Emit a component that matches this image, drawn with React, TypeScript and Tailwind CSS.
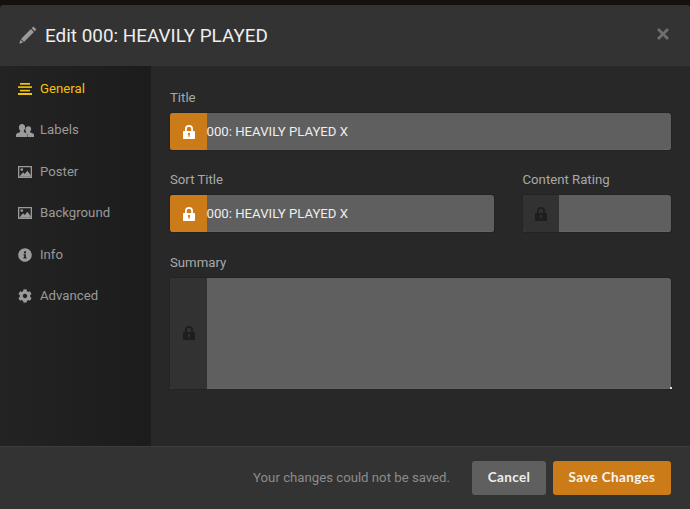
import type { ReactNode } from "react";
import { FaCog, FaInfoCircle } from "react-icons/fa";

function GeneralIcon() {
  return (
    <svg width="14" height="12" viewBox="0 0 14 12" fill="currentColor">
      <rect x="2" y="0" width="10" height="1.7" />
      <rect x="0" y="3.3" width="14" height="1.6" />
      <rect x="2" y="6.8" width="10" height="1.6" />
      <rect x="0" y="10" width="14" height="2" />
    </svg>
  );
}

function UsersIcon() {
  return (
    <svg width="18" height="13" viewBox="0 0 18 13" fill="currentColor">
      <path d="M12.6 2.2c1.5 0 2.5 1.1 2.5 2.7 0 1-.4 1.900-1 2.500v.8c0 .5 3.900 1 3.900 2.300V13h-6v-1.500c0-1.100-1.300-1.900-2.500-2.400.3-.3.6-.7.7-1.200-.5-.6-.8-1.500-.8-2.500 0-2 1.300-3.200 3.200-3.200z" />
      <path d="M6 0c1.900 0 3.100 1.400 3.100 3.500 0 1.300-.5 2.500-1.300 3.200v1.100c0 .7 3.700 1.400 3.700 3.100V13H0v-2.100c0-1.700 4.200-2.400 4.200-3.100V6.700C3.400 6 2.900 4.800 2.900 3.500 2.900 1.400 4.100 0 6 0z" />
    </svg>
  );
}

function ImageIcon() {
  return (
    <svg width="14" height="12" viewBox="0 0 14 12" fill="currentColor">
      <path
        fillRule="evenodd"
        d="M0 0h14v12H0zM1.300 1.300v9.400h11.400V1.300z"
      />
      <circle cx="3.800" cy="3.600" r="1.300" />
      <path d="M1.300 10.700 5 6.200l1.800 1.900 2.500-3.400 3.400 4.300v1.700z" />
    </svg>
  );
}

function PencilIcon() {
  return (
    <svg width="18" height="18" viewBox="0 0 18 18" fill="currentColor">
      <path d="M14.400.6 17.400 3.600 15.700 5.300 12.700 2.300z" />
      <path d="M11.900 3.100 14.900 6.100 5 16 2 13z" />
      <path d="M1.500 13.800 4.200 16.500.3 17.700z" />
    </svg>
  );
}

function CloseIcon() {
  return (
    <svg width="12" height="12" viewBox="0 0 12 12" fill="none" stroke="currentColor" strokeWidth="2.800">
      <path d="M1 1 11 11M11 1 1 11" />
    </svg>
  );
}

function LockIcon() {
  return (
    <svg width="12" height="14" viewBox="0 0 12 14" fill="currentColor">
      <path
        fillRule="evenodd"
        d="M2 6V4a4 4 0 0 1 8 0v2h1.200c.5 0 .8.300.8.800v6.400c0 .5-.3.800-.8.800H.8c-.5 0-.8-.3-.8-.8V6.800C0 6.300.3 6 .8 6zM3.800 6h4.400V4a2.200 2.200 0 0 0-4.400 0zM6 7.800a1.200 1.200 0 0 0-.6 2.200v1.800h1.200V10A1.200 1.200 0 0 0 6 7.800z"
      />
    </svg>
  );
}

const NAV = [
  { label: "General", icon: <GeneralIcon />, active: true },
  { label: "Labels", icon: <UsersIcon /> },
  { label: "Poster", icon: <ImageIcon /> },
  { label: "Background", icon: <ImageIcon /> },
  { label: "Info", icon: <FaInfoCircle size={14} /> },
  { label: "Advanced", icon: <FaCog size={14} /> },
];

function Label({ children }: { children: ReactNode }) {
  return <div className="mb-[6px] h-5 pt-[1px] text-[13.2px] leading-5 text-[#a8a8a8]">{children}</div>;
}

function LockedField({
  value,
  locked = false,
  tall = false,
}: {
  value?: string;
  locked?: boolean;
  tall?: boolean;
}) {
  return (
    <div
      className={`flex overflow-hidden rounded-[3px] bg-[#5f5f5f] shadow-[inset_0_-1px_0_#666666,0_0_0_1px_#232323] ${
        tall ? "h-[111px]" : "h-[37px]"
      }`}
    >
      <div
        className={`flex w-[36.5px] shrink-0 items-center justify-center pl-[1px] ${
          locked ? "bg-[#cc7b19] text-white" : "bg-[#323232] text-[#1e1e1e]"
        } ${tall ? "pb-[2px]" : ""}`}
      >
        <LockIcon />
      </div>
      {value && (
        <div className="flex items-center text-[13.2px] text-[#eeeeee]">{value}</div>
      )}
    </div>
  );
}

export default function App() {
  return (
    <div className="flex h-[509px] w-[690px] flex-col overflow-hidden bg-[#17100d] font-['Roboto',sans-serif]">
      <div className="mt-[5px] flex h-[61px] shrink-0 items-center justify-between rounded-t-[3px] bg-[#333333] pl-[19px] pr-[21px]">
        <div className="flex items-center gap-[8px]">
          <span className="text-[#9a9a9a]">
            <PencilIcon />
          </span>
          <h1 className="pt-[1px] text-[18.9px] font-normal text-[#eeeeee]">Edit 000: HEAVILY PLAYED</h1>
        </div>
        <span className="-mt-[3px] text-[#6f6f6f]">
          <CloseIcon />
        </span>
      </div>

      <div className="flex min-h-0 flex-1 bg-[#282828]">
        <nav className="w-[151px] shrink-0 bg-gradient-to-r from-[#232323] to-[#1c1c1c] pt-[2px]">
          {NAV.map((item) => (
            <div
              key={item.label}
              className={`flex h-[41.5px] items-center text-[13.2px] ${
                item.active ? "text-[#f5c20a]" : "text-[#9a9a9a]"
              }`}
            >
              <span className="flex w-[40px] justify-center pl-[10px]">{item.icon}</span>
              {item.label}
            </div>
          ))}
        </nav>

        <main className="min-w-0 flex-1 pl-[19px] pr-[19px] pt-[21px]">
          <Label>Title</Label>
          <LockedField value="000: HEAVILY PLAYED X" locked />

          <div className="mt-[19px] flex gap-[28.5px]">
            <div className="w-[324px]">
              <Label>Sort Title</Label>
              <LockedField value="000: HEAVILY PLAYED X" locked />
            </div>
            <div className="flex-1">
              <Label>Content Rating</Label>
              <LockedField />
            </div>
          </div>

          <div className="relative mt-[20px]">
            <Label>Summary</Label>
            <LockedField tall />
            <span className="absolute bottom-0 right-[-1px] h-[2px] w-[2px] bg-[#dddddd]" />
          </div>
        </main>
      </div>

      <div className="flex h-[63px] shrink-0 items-center justify-end border-t border-[#3d3d3d] bg-[#333333] pb-[1px] pr-[19px]">
        <span className="mr-[22px] text-[13.2px] text-[#8c8c8c]">Your changes could not be saved.</span>
        <button className="h-[34px] w-[74px] rounded-[3px] bg-[#5f5f5f] font-['Lato',sans-serif] text-[13.5px] font-bold tracking-[0.35px] text-[#eeeeee]">
          Cancel
        </button>
        <button className="ml-[7px] h-[34px] w-[118px] rounded-[3px] bg-[#cc7b19] font-['Lato',sans-serif] text-[13.5px] font-bold tracking-[0.35px] text-[#f5f5f5]">
          Save Changes
        </button>
      </div>
    </div>
  );
}
